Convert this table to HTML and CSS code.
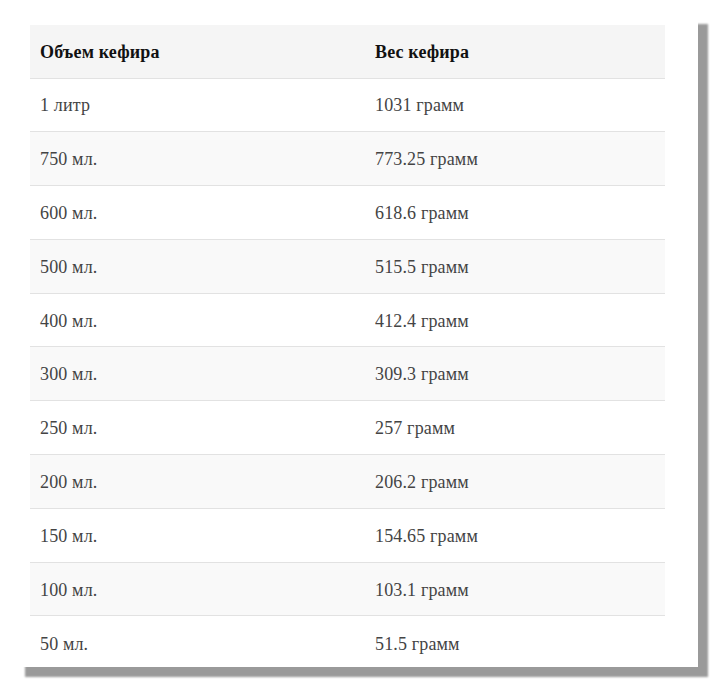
FILE: index.html
```html
<!DOCTYPE html>
<html lang="ru">
<head>
<meta charset="utf-8">
<link rel="stylesheet" href="styles.css">
</head>
<body>
<div class="card">
<table class="tbl">
<thead>
<tr><th class="c1">Объем кефира</th><th>Вес кефира</th></tr>
</thead>
<tbody>
<tr><td class="c1">1 литр</td><td>1031 грамм</td></tr>
<tr><td class="c1">750 мл.</td><td>773.25 грамм</td></tr>
<tr><td class="c1">600 мл.</td><td>618.6 грамм</td></tr>
<tr><td class="c1">500 мл.</td><td>515.5 грамм</td></tr>
<tr><td class="c1">400 мл.</td><td>412.4 грамм</td></tr>
<tr><td class="c1">300 мл.</td><td>309.3 грамм</td></tr>
<tr><td class="c1">250 мл.</td><td>257 грамм</td></tr>
<tr><td class="c1">200 мл.</td><td>206.2 грамм</td></tr>
<tr><td class="c1">150 мл.</td><td>154.65 грамм</td></tr>
<tr><td class="c1">100 мл.</td><td>103.1 грамм</td></tr>
<tr><td class="c1">50 мл.</td><td>51.5 грамм</td></tr>
</tbody>
</table>
</div>
</body>
</html>
```
FILE: styles.css
```css
html, body {
  margin: 0;
  padding: 0;
  background: #fff;
  overflow: hidden;
}
body {
  padding: 14px 0 0 15px;
  height: 682px;
  box-sizing: border-box;
}
.card {
  width: 683px;
  height: 653px;
  background: #fff;
  box-shadow: 10px 10px 2px #9a9a9a;
  padding: 11px 0 0 15px;
  box-sizing: border-box;
  overflow: hidden;
}
.tbl {
  width: 635px;
  border-collapse: collapse;
  font-family: "Liberation Serif", "Times New Roman", serif;
  font-size: 18px;
  letter-spacing: 0.15px;
  color: #444;
}
.tbl th, .tbl td {
  height: 53.8px;
  padding: 2px 10px 0;
  text-align: left;
  vertical-align: middle;
  border-bottom: 1px solid #e2e2e2;
  box-sizing: border-box;
}
.tbl th {
  height: 53px;
  font-weight: bold;
  color: #111;
  background: #f5f5f5;
}
.tbl .c1 {
  width: 335px;
}
.tbl tbody tr:nth-child(even) td {
  background: #f9f9f9;
}
.tbl tbody tr:last-child td {
  border-bottom: none;
}
```
